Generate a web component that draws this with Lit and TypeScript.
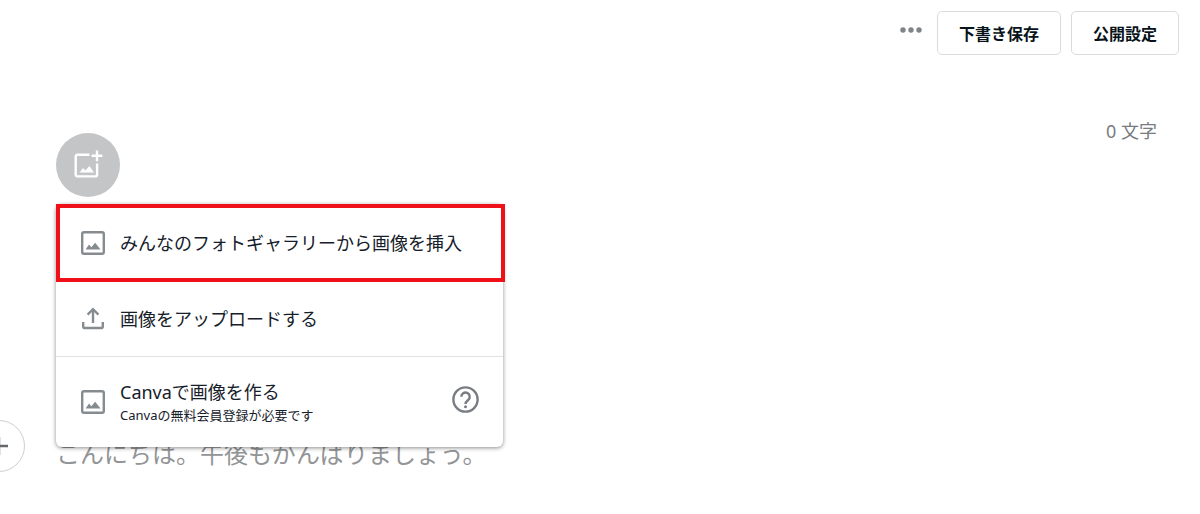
import { LitElement, html, css, svg } from "lit";
import { customElement } from "lit/decorators.js";

const imageIcon = html`<svg class="icon" viewBox="0 0 24 24" aria-hidden="true">
  <rect x="1.2" y="1.2" width="21.6" height="21.6" rx="1.8" fill="none" stroke="currentColor" stroke-width="2.4" />
  <path d="M4.6 18.4 8 13.6l2.3 2.7 3.9-4.5 5.3 6.6z" fill="currentColor" />
</svg>`;

const uploadIcon = html`<svg class="icon" viewBox="0 0 24 24" aria-hidden="true">
  <g fill="none" stroke="currentColor" stroke-width="2.4">
    <path d="M2.2 15v4.4a1.6 1.6 0 0 0 1.6 1.6h16.4a1.6 1.6 0 0 0 1.6-1.6V15" />
    <path d="M12 16V3" />
    <path d="M6.6 7.6 12 2.2l5.4 5.4" />
  </g>
</svg>`;

const addImageIcon = html`<svg class="add-icon" viewBox="0 0 30 30" aria-hidden="true">
  <g fill="none" stroke="currentColor" stroke-width="2.4">
    <path d="M16.5 4.8H4.3a1.6 1.6 0 0 0-1.6 1.6v18.4a1.6 1.6 0 0 0 1.6 1.6h18.2a1.6 1.6 0 0 0 1.6-1.6V13.6" />
    <path d="M24 .4v10.8M18.6 5.8h10.8" />
  </g>
  <path d="M6.6 22.4 10 18l2.4 2.5 4-4.5 4.6 6.4z" fill="currentColor" />
</svg>`;

@customElement("app-root")
export class AppRoot extends LitElement {
  static styles = css`
    :host {
      display: block;
      min-height: 100vh;
      overflow: hidden;
      background: #fff;
      color: #16202a;
      font-family: "Noto Sans", "Noto Sans CJK JP", sans-serif;
    }
    * {
      box-sizing: border-box;
    }
    button,
    textarea {
      font: inherit;
      color: inherit;
      margin: 0;
      padding: 0;
      border: 0;
      background: none;
    }
    button {
      cursor: pointer;
    }
    .header {
      display: flex;
      justify-content: flex-end;
      padding: 11px 21px 0;
    }
    .more {
      display: flex;
      align-items: center;
      height: 38px;
      margin-right: 15px;
      color: #7f8489;
    }
    .more svg {
      display: block;
      width: 22px;
      height: 6px;
    }
    .action {
      height: 44px;
      padding: 0 21px;
      border: 1px solid #d9dcdf;
      border-radius: 5px;
      font-size: 16px;
      font-weight: 700;
      color: #08131a;
    }
    .action + .action {
      margin-left: 10px;
    }
    .top {
      display: flex;
      justify-content: space-between;
      align-items: flex-start;
      padding: 62px 43px 0 56px;
    }
    .count {
      font-size: 18px;
      line-height: 28px;
      color: #787c80;
    }
    .eyecatch {
      position: relative;
      margin-top: 16px;
    }
    .add {
      display: grid;
      place-items: center;
      width: 64px;
      height: 64px;
      border-radius: 50%;
      background: #c3c5c7;
      color: #fff;
    }
    .add-icon {
      width: 30px;
      height: 30px;
    }
    .menu {
      position: absolute;
      z-index: 1;
      top: 71px;
      left: 0;
      width: 447px;
      background: #fff;
      border-radius: 6px;
      box-shadow: 0 1px 4px rgba(0, 0, 0, 0.45);
    }
    .item {
      display: flex;
      align-items: center;
      gap: 15px;
      width: 100%;
      height: 74px;
      padding: 0 24px 0 25px;
      text-align: left;
      font-size: 18px;
      line-height: 26px;
    }
    .featured {
      width: 449px;
      height: 78px;
      padding-left: 21px;
      border: 4px solid #f01019;
    }
    .canva {
      height: 91px;
      border-top: 1px solid #dfe3e3;
    }
    .label {
      flex: 1;
      white-space: nowrap;
    }
    .note {
      display: block;
      font-size: 13px;
      line-height: 20px;
    }
    .icon {
      flex: none;
      width: 24px;
      height: 24px;
      color: #868b8f;
    }
    .help {
      flex: none;
      width: 27px;
      height: 27px;
      margin-bottom: 6px;
      color: #787d83;
    }
    .compose {
      display: flex;
      align-items: center;
      gap: 31px;
      margin-top: 223px;
      padding-right: 43px;
    }
    .insert {
      display: grid;
      place-items: center;
      flex: none;
      width: 52px;
      height: 52px;
      margin-left: -27px;
      border: 1px solid #cfcfcf;
      border-radius: 50%;
      color: #66696c;
    }
    .insert svg {
      width: 18px;
      height: 18px;
    }
    .body {
      flex: 1;
      min-width: 0;
      height: 52px;
      padding-top: 16px;
      outline: 0;
      resize: none;
      overflow: hidden;
      font-size: 24px;
      line-height: 36px;
    }
    .body::placeholder {
      color: #929496;
      opacity: 1;
    }
  `;

  render() {
    return html`
      <header class="header">
        <button class="more" aria-label="その他">
          <svg viewBox="0 0 22 6" aria-hidden="true">
            ${[3, 11, 19].map((x) => svg`<circle cx=${x} cy="3" r="2.7" fill="currentColor" />`)}
          </svg>
        </button>
        <button class="action">下書き保存</button>
        <button class="action">公開設定</button>
      </header>
      <main>
        <div class="top">
          <div class="eyecatch">
            <button class="add" aria-label="見出し画像を追加">${addImageIcon}</button>
            <div class="menu">
              <button class="item featured">
                ${imageIcon}<span class="label">みんなのフォトギャラリーから画像を挿入</span>
              </button>
              <button class="item">${uploadIcon}<span class="label">画像をアップロードする</span></button>
              <button class="item canva">
                ${imageIcon}
                <span class="label">Canvaで画像を作る<span class="note">Canvaの無料会員登録が必要です</span></span>
                <svg class="help" viewBox="0 0 27 27" aria-hidden="true">
                  <g fill="none" stroke="currentColor" stroke-width="2.4">
                    <circle cx="13.5" cy="13.5" r="12.1" />
                    <path d="M9.3 10.8a4.2 4.2 0 1 1 7 3.1c-1.5 1.3-2.8 2-2.8 4.1" />
                  </g>
                  <circle cx="13.5" cy="20.7" r="1.5" fill="currentColor" />
                </svg>
              </button>
            </div>
          </div>
          <div class="count">0 文字</div>
        </div>
        <div class="compose">
          <button class="insert" aria-label="挿入">
            <svg viewBox="0 0 18 18" aria-hidden="true">
              <path d="M9 0v18M0 9h18" stroke="currentColor" stroke-width="2.4" />
            </svg>
          </button>
          <textarea class="body" rows="1" aria-label="本文" placeholder="こんにちは。午後もがんばりましょう。"></textarea>
        </div>
      </main>
    `;
  }
}
